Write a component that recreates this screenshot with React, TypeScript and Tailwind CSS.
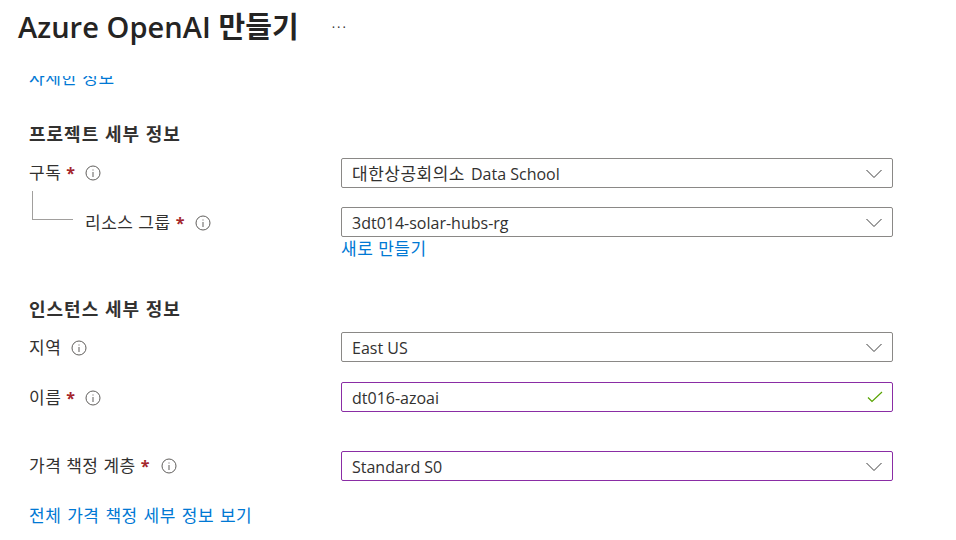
import React from "react";

const font = { fontFamily: '"Open Sans","Noto Sans CJK KR",sans-serif' };

function Info() {
  return (
    <svg width="16" height="16" viewBox="0 0 16 16" className="shrink-0" fill="none">
      <circle cx="8" cy="8" r="7" stroke="#605e5c" strokeWidth="1" />
      <rect x="7.5" y="7" width="1" height="5" fill="#605e5c" />
      <rect x="7.5" y="4.5" width="1" height="1" fill="#605e5c" />
    </svg>
  );
}

function Chevron() {
  return (
    <svg width="16" height="10" viewBox="0 0 16 10" fill="none" className="shrink-0 mt-[2px]">
      <path d="M0.5 1 L8 8.5 L15.5 1" stroke="#3f3f3f" strokeWidth="1" />
    </svg>
  );
}

function Check() {
  return (
    <svg width="16" height="12" viewBox="0 0 16 12" fill="none" className="shrink-0 -mr-[1px]">
      <path d="M1 6.5 L5 10.5 L15 1" stroke="#57a300" strokeWidth="1.2" />
    </svg>
  );
}

function Star() {
  return <span className="text-[#a4262c] font-bold text-[16px] ml-[5px]">*</span>;
}

function Label({ children }: { children: React.ReactNode }) {
  return <span className="text-[17px] tracking-[0.5px] leading-[24px]">{children}</span>;
}

function Box({ value, prefix, purple, check }: { value: string; prefix?: string; purple?: boolean; check?: boolean }) {
  return (
    <div
      className={
        "w-[552px] h-[30px] flex items-center justify-between rounded-[2px] border pl-[10px] pr-[10px] text-[16px] text-[#323130] " +
        (purple ? "border-[#8a2da5]" : "border-[#8a8886]")
      }
    >
      <span className="pt-[2px]">
        {prefix ? <span className="text-[17px] tracking-[0.5px] mr-[6px]">{prefix}</span> : null}
        {value}
      </span>
      {check ? <Check /> : <Chevron />}
    </div>
  );
}

export default function App() {
  return (
    <div className="w-[956px] h-[540px] overflow-hidden bg-white text-[#323130]" style={font}>
      <header className="h-[76px] pl-[18px] pt-[7px] flex items-start">
        <h1 className="text-[29px] leading-[40px] font-semibold text-[#252423] whitespace-nowrap tracking-[0.05px]">Azure OpenAI 만들기</h1>
        <span className="ml-[33px] mt-[10px] text-[13px] leading-[20px] text-[#323130] tracking-[2px]">···</span>
      </header>
      <div className="h-[464px] overflow-hidden pl-[29px]">
        <div className="h-[20px] -mt-[8px] text-[17px] tracking-[0.5px] leading-[20px] text-[#0078d4]">자세한 정보</div>
        <h2 className="mt-[35px] text-[18px] tracking-[1px] leading-[22px] font-bold text-[#323130]">프로젝트 세부 정보</h2>
        <div className="mt-[13px] flex items-center h-[30px]">
          <div className="w-[312px] flex items-center">
            <Label>구독</Label><Star />
            <span className="ml-[10px] flex"><Info /></span>
          </div>
          <Box prefix="대한상공회의소" value="Data School" />
        </div>
        <div className="mt-[19px] flex items-center h-[30px]">
          <div className="w-[312px] flex items-center pl-[3px] pt-[2px]">
            <div className="w-[41px] h-[29px] -mt-[36px] mr-[12px] border-l border-b border-[#a19f9d] shrink-0" />
            <Label>리소스 그룹</Label><Star />
            <span className="ml-[11px] flex"><Info /></span>
          </div>
          <Box value="3dt014-solar-hubs-rg" />
        </div>
        <div className="ml-[312px] mt-[2px] text-[17px] tracking-[0.5px] leading-[20px] text-[#0078d4]">새로 만들기</div>
        <h2 className="mt-[39px] text-[18px] tracking-[1px] leading-[22px] font-bold text-[#323130]">인스턴스 세부 정보</h2>
        <div className="mt-[12px] flex items-center h-[30px]">
          <div className="w-[312px] flex items-center pt-[2px]">
            <Label>지역</Label>
            <span className="ml-[10px] flex"><Info /></span>
          </div>
          <Box value="East US" />
        </div>
        <div className="mt-[20px] flex items-center h-[30px]">
          <div className="w-[312px] flex items-center pt-[2px]">
            <Label>이름</Label><Star />
            <span className="ml-[10px] flex"><Info /></span>
          </div>
          <Box value="dt016-azoai" purple check />
        </div>
        <div className="mt-[39px] flex items-center h-[30px]">
          <div className="w-[312px] flex items-center">
            <Label>가격 책정 계층</Label><Star />
            <span className="ml-[12px] flex"><Info /></span>
          </div>
          <Box value="Standard S0" purple />
        </div>
        <div className="mt-[25px] text-[17px] tracking-[0.5px] [word-spacing:1px] leading-[20px] text-[#0078d4]">전체 가격 책정 세부 정보 보기</div>
      </div>
    </div>
  );
}
